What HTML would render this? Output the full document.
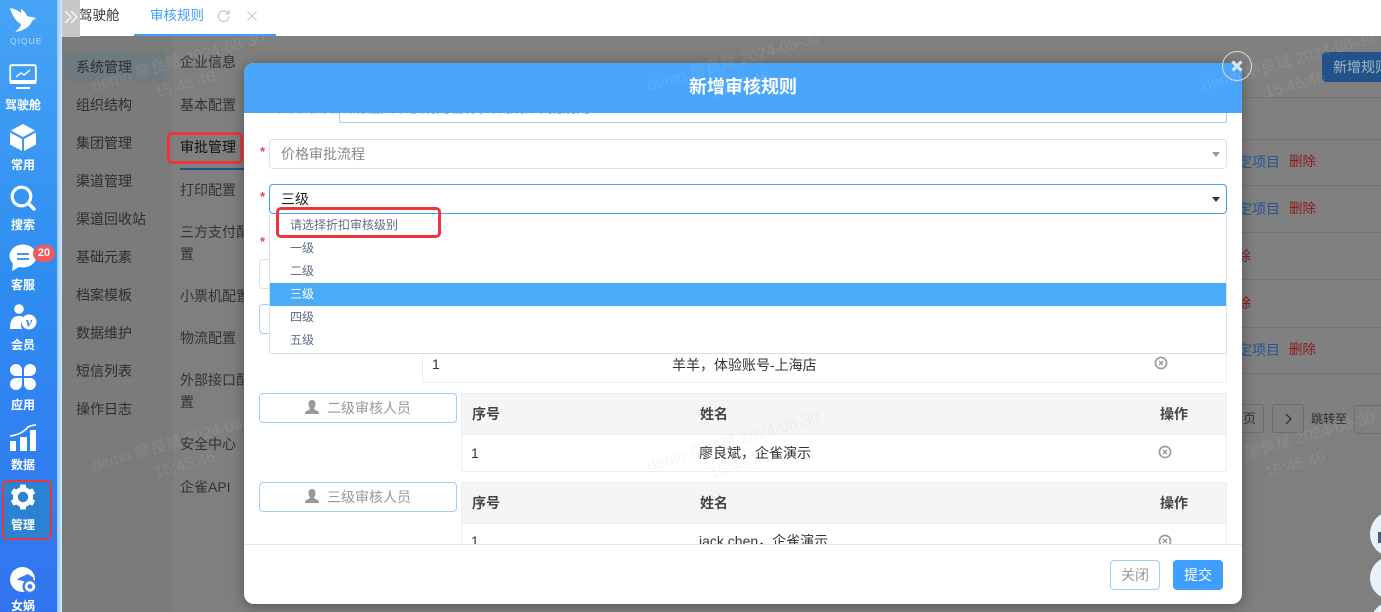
<!DOCTYPE html>
<html lang="zh"><head><meta charset="utf-8"><title>新增审核规则</title>
<style>
*{box-sizing:border-box}
html,body{margin:0;padding:0;width:1381px;height:612px;overflow:hidden;background:#7f7f7f}
body{position:relative;font-family:"Liberation Sans","Noto Sans CJK SC",sans-serif;font-size:14px;color:#333}
.a,.t{position:absolute}
.t{white-space:nowrap;line-height:20px;transform:translateY(-10px)}
.nav{position:absolute;left:0;width:46px;text-align:center;color:#fff;font-size:12px;font-weight:700;line-height:16px;white-space:nowrap}
.m1{left:76px;color:#2e2e2e}.m2{left:180px;color:#333;}
.ln{position:absolute;left:0;right:0;height:1px;background:#757575}
.sel{position:absolute;left:25px;width:958px;height:30px;border:1px solid #dcdfe6;border-radius:4px;background:#fff;line-height:28px;padding-left:11px}
.arr{position:absolute;right:6px;top:12px;width:0;height:0;border:4px solid transparent;border-top:5px solid #999;border-bottom:0}
.opt{position:absolute;left:0;right:0;height:23px;line-height:23px;padding-left:20px;font-size:12px;color:#5f6f8a}
.star{position:absolute;left:16px;color:#f04545;font-size:13px;line-height:12px;font-weight:700}
.btn{position:absolute;left:15px;width:198px;height:30px;border:1px solid #a0cfff;border-radius:4px;background:#fff;color:#999;font-size:14px;line-height:28px;text-align:center}
.btn svg{vertical-align:-1px;margin-right:8px}
.tb{position:absolute;left:217px;width:766px;border:1px solid #ebeef5;background:#fff}
.th{height:41px;background:#f5f5f7;border-bottom:1px solid #ebeef5;position:relative;font-weight:700;font-size:14px;color:#444}
.tb span{position:absolute;white-space:nowrap;line-height:20px}
.wm{position:absolute;width:240px;text-align:center;color:rgba(255,255,255,.09);font-size:16px;line-height:24px;transform:rotate(-16deg);white-space:nowrap}
</style></head><body>

<!-- background right table -->
<div class="a" style="left:1242px;top:36px;width:139px;height:400px;background:#808080"></div>
<div class="ln" style="top:97px;left:1242px"></div><div class="ln" style="top:139px;left:1242px"></div>
<div class="ln" style="top:185px;left:1242px"></div><div class="ln" style="top:232px;left:1242px"></div>
<div class="ln" style="top:279px;left:1242px"></div><div class="ln" style="top:327px;left:1242px"></div>
<div class="ln" style="top:373px;left:1242px"></div>
<div class="a" style="left:1322px;top:52px;width:70px;height:30px;background:#22528a;border-radius:4px;color:#a9b4c2;font-size:14px;line-height:30px;padding-left:11px;white-space:nowrap">新增规则</div>
<div class="t" style="left:1238px;top:162px;color:#24568f;font-size:14px">定项目</div><div class="t" style="left:1289px;top:162px;color:#8e1b1b;font-size:13.500px">删除</div>
<div class="t" style="left:1238px;top:209px;color:#24568f;font-size:14px">定项目</div><div class="t" style="left:1289px;top:209px;color:#8e1b1b;font-size:13.500px">删除</div>
<div class="t" style="left:1223px;top:256px;color:#8e1b1b;font-size:14px">删除</div>
<div class="t" style="left:1223px;top:303px;color:#8e1b1b;font-size:14px">删除</div>
<div class="t" style="left:1238px;top:350px;color:#24568f;font-size:14px">定项目</div><div class="t" style="left:1289px;top:350px;color:#8e1b1b;font-size:13.500px">删除</div>
<div class="a" style="left:1230px;top:404px;width:34px;height:29px;border:1px solid #6e6e6e;border-radius:3px;color:#333;font-size:13px;line-height:27px;padding-left:12px">页</div>
<div class="a" style="left:1272px;top:404px;width:32px;height:29px;border:1px solid #6e6e6e;border-radius:3px"><svg width="30" height="27"><path d="M13 9l5 5-5 5" fill="none" stroke="#333" stroke-width="1.300"/></svg></div>
<div class="t" style="left:1311px;top:419px;font-size:12px;color:#2e2e2e">跳转至</div>
<div class="a" style="left:1354px;top:405px;width:40px;height:29px;border:1px solid #6e6e6e;border-radius:3px"></div>
<div class="a" style="left:1370px;top:511px;width:46px;height:46px;border-radius:50%;background:#e9f1fb"></div>
<div class="a" style="left:1378px;top:532px;width:3px;height:11px;background:#4a5a78"></div>
<div class="a" style="left:1370px;top:556px;width:46px;height:44px;border-radius:50%;background:#e9f1fb"></div>
<div class="a" style="left:1371px;top:602px;width:40px;height:40px;border-radius:50%;background:#e9f1fb"></div>

<!-- left menus -->
<div class="a" style="left:62px;top:36px;width:111px;height:576px;background:#7b7b7b"></div>
<div class="a" style="left:65px;top:52px;width:100px;height:30px;background:#6f7a80;border-radius:4px"></div>
<div class="t m1" style="top:67px">系统管理</div><div class="t m1" style="top:105px">组织结构</div>
<div class="t m1" style="top:143px">集团管理</div><div class="t m1" style="top:181px">渠道管理</div>
<div class="t m1" style="top:219px">渠道回收站</div><div class="t m1" style="top:257px">基础元素</div>
<div class="t m1" style="top:295px">档案模板</div><div class="t m1" style="top:333px">数据维护</div>
<div class="t m1" style="top:371px">短信列表</div><div class="t m1" style="top:409px">操作日志</div>

<div class="t m2" style="top:62px">企业信息</div><div class="t m2" style="top:105px">基本配置</div>
<div class="t m2" style="top:147px;color:#111">审批管理</div><div class="t m2" style="top:190px">打印配置</div>
<div class="t m2" style="top:232px">三方支付配</div><div class="t m2" style="top:254px">置</div>
<div class="t m2" style="top:296px">小票机配置</div><div class="t m2" style="top:338px">物流配置</div>
<div class="t m2" style="top:380px">外部接口配</div><div class="t m2" style="top:402px">置</div>
<div class="t m2" style="top:444px">安全中心</div><div class="t m2" style="top:487px">企雀API</div>
<div class="a" style="left:180px;top:168px;width:64px;height:2px;background:#24508a"></div>
<div class="a" style="left:167px;top:132px;width:76px;height:32px;border:3px solid #e8383a;border-radius:5px"></div>

<!-- top bar -->
<div class="a" style="left:62px;top:0;width:1319px;height:36px;background:#fff"></div>
<div class="a" style="left:62px;top:0;width:18px;height:37px;background:#c8c8c8;color:#fff"><svg width="18" height="36"><path d="M3 11l6 6-6 6M9 11l6 6-6 6" fill="none" stroke="#fff" stroke-width="1.200"/></svg></div>
<div class="t" style="left:79px;top:16px;color:#333;font-size:13.500px">驾驶舱</div>
<div class="t" style="left:150px;top:16px;color:#409eff;font-size:13.500px">审核规则</div>
<div class="a" style="left:134px;top:34px;width:142px;height:2px;background:#409eff"></div>
<svg class="a" style="left:215px;top:7px" width="18" height="18" viewBox="0 0 18 18"><path d="M14 9.500A5.300 5.300 0 1 1 12.400 5.300L14 6.800M14 3v3.800h-3.600" fill="none" stroke="#c4c6cb" stroke-width="1.200"/></svg>
<svg class="a" style="left:246px;top:10px" width="12" height="12"><path d="M1.500 1.500l9 9M10.500 1.500l-9 9" stroke="#c8cacd" stroke-width="1.100"/></svg>

<!-- sidebar -->
<div class="a" style="left:0;top:0;width:57px;height:612px;background:linear-gradient(180deg,#47a4f6 0,#2f8df2 45%,#3274f0 100%)"></div>
<div class="a" style="left:57px;top:0;width:5px;height:612px;background:linear-gradient(90deg,#8cc8fb,#d3eafd)"></div>
<svg class="a" style="left:0;top:0" width="50" height="36" viewBox="0 0 50 36"><path d="M10 8C14 9 18 10 21 13L21 9C24 11 26 13 27 16C30 17 33 17 36 18L32 21C30 27 23 31 15 32C19 29 21 26 21 24C16 22 12 15 10 8Z" fill="#fff"/></svg>
<div class="a" style="left:10px;top:35px;width:30px;font-size:8.500px;line-height:12px;letter-spacing:1px;color:#b9dcfb;white-space:nowrap">QIQUE</div>
<svg class="a" style="left:9px;top:64px" width="28" height="26" viewBox="0 0 28 26"><rect x="1.200" y="1.200" width="25.600" height="17.600" rx="1.500" fill="none" stroke="#fff" stroke-width="1.800"/><path d="M1 16h26v4H1z" fill="#fff"/><path d="M7 13l5-4 3 2 6-5" fill="none" stroke="#fff" stroke-width="1.400"/><path d="M7 23h14v2H7z" fill="#fff"/></svg>
<div class="nav" style="top:97px">驾驶舱</div>
<svg class="a" style="left:10px;top:124px" width="26" height="27" viewBox="0 0 26 27"><path d="M13 0l12 6.500L13 13 1 6.500zM0 8.500l12 6.500v12L0 20.500zM26 8.500v12l-12 6.500V15z" fill="#fff"/></svg>
<div class="nav" style="top:157px">常用</div>
<svg class="a" style="left:10px;top:185px" width="26" height="26" viewBox="0 0 26 26"><circle cx="11.500" cy="11.500" r="9.300" fill="none" stroke="#fff" stroke-width="3.200"/><path d="M18.500 18.500l5.500 5.500" stroke="#fff" stroke-width="3.400" stroke-linecap="round"/></svg>
<div class="nav" style="top:217px">搜索</div>
<svg class="a" style="left:9px;top:244px" width="28" height="27" viewBox="0 0 28 27"><ellipse cx="14" cy="12" rx="13.500" ry="11.500" fill="#fff"/><path d="M4 19l-1 8 9-5z" fill="#fff"/><path d="M8 10h12M8 15h12" stroke="#3f97f3" stroke-width="2"/></svg>
<div class="a" style="left:33px;top:245px;width:22px;height:17px;border-radius:9px;background:#ed5a5f;color:#fff;font-size:11px;font-weight:700;line-height:17px;text-align:center">20</div>
<div class="nav" style="top:277px">客服</div>
<svg class="a" style="left:9px;top:304px" width="28" height="26" viewBox="0 0 28 26"><circle cx="10" cy="5" r="4.800" fill="#fff"/><path d="M1 25c0-9 3-13 9-13 2 0 4 .5 5.500 1.500C12 16 11 21 13 25z" fill="#fff"/><circle cx="20" cy="18" r="7.500" fill="#fff"/><text x="20" y="22.500" text-anchor="middle" font-size="14" font-weight="700" font-style="italic" fill="#3888ef" font-family="Liberation Serif">v</text></svg>
<div class="nav" style="top:337px">会员</div>
<svg class="a" style="left:10px;top:364px" width="26" height="26" viewBox="0 0 26 26"><path d="M6 0a6 6 0 0 1 6 6v6H6A6 6 0 0 1 6 0zM20 0a6 6 0 0 1 0 12h-6V6a6 6 0 0 1 6-6zM6 14h6v6a6 6 0 1 1-6-6zM14 14h6a6 6 0 1 1-6 6z" fill="#fff"/></svg>
<div class="nav" style="top:397px">应用</div>
<svg class="a" style="left:10px;top:424px" width="27" height="27" viewBox="0 0 27 27"><path d="M0 17h6v10H0zM10 13h7v14h-7zM20 6h6v21h-6z" fill="#fff"/><path d="M0 12C8 11 14 8 18 3c2-1 4-2 8-2" fill="none" stroke="#fff" stroke-width="1.600"/></svg>
<div class="nav" style="top:457px">数据</div>

<div class="a" style="left:2px;top:480px;width:50px;height:60px;background:#2b82d2;border:2px solid #e8383a;border-radius:6px"></div>
<svg class="a" style="left:10px;top:484px" width="26" height="26" viewBox="0 0 26 26"><circle cx="13" cy="13" r="7.600" fill="none" stroke="#fff" stroke-width="4.800"/><g fill="#fff"><rect x="10" y="0.500" width="6" height="5" rx="1"/><rect x="10" y="20.500" width="6" height="5" rx="1"/><rect x="10" y="0.500" width="6" height="5" rx="1" transform="rotate(60 13 13)"/><rect x="10" y="0.500" width="6" height="5" rx="1" transform="rotate(120 13 13)"/><rect x="10" y="0.500" width="6" height="5" rx="1" transform="rotate(240 13 13)"/><rect x="10" y="0.500" width="6" height="5" rx="1" transform="rotate(300 13 13)"/></g></svg>
<div class="nav" style="top:517px">管理</div>

<svg class="a" style="left:10px;top:567px" width="27" height="27" viewBox="0 0 27 27"><circle cx="12.500" cy="12.500" r="12.500" fill="#fff"/><path d="M7 13c3-4 7-3 10-6 3 1 6 3 7 5-3 1-5 1-8 3-3-1-6-2-9-2z" fill="#3a7df0"/><circle cx="20" cy="19.500" r="7.500" fill="#3a7df0"/><circle cx="20" cy="19.500" r="3.800" fill="none" stroke="#fff" stroke-width="2.800"/></svg>
<div class="nav" style="top:598px">女娲</div>

<!-- modal -->
<div class="a" style="left:244px;top:63px;width:998px;height:541px;background:#fff;border-radius:10px;overflow:hidden;box-shadow:0 2px 14px rgba(0,0,0,.35)">
  <div class="a" style="left:0;top:50px;width:998px;height:431px;overflow:hidden;background:#fff">
    <div class="a" style="left:28px;top:-15px;line-height:20px;color:#ccc;white-space:nowrap">审核规则名称</div>
    <div class="a" style="left:95px;top:-30px;width:888px;height:40px;border:1px solid #b7c8e6;border-radius:2px"></div>
    <div class="a" style="left:108px;top:-15px;line-height:20px;color:#aaa;white-space:nowrap">请输入审核规则名称，如折扣审批规则</div>
    <div class="star" style="top:33px">*</div>
    <div class="sel" style="top:26px;color:#888">价格审批流程<i class="arr"></i></div>
    <div class="star" style="top:78px">*</div>
    <div class="sel" style="top:71px;color:#222;border-color:#409eff">三级<i class="arr" style="border-top-color:#333"></i></div>
    <div class="star" style="top:123px">*</div>

    <div class="btn" style="top:146px;border-color:#dcdfe6"></div>
    <div class="btn" style="top:191px"></div>
    <div class="tb" style="left:178px;top:200px;width:805px;height:70px"><span style="left:9px;top:40px">1</span><span style="left:249px;top:41px">羊羊，体验账号-上海店</span>
      <svg style="position:absolute;left:731px;top:42px" width="14" height="14"><circle cx="7" cy="7" r="5.600" fill="none" stroke="#999" stroke-width="1.600"/><path d="M5 5l4 4M9 5l-4 4" stroke="#999" stroke-width="1.300"/></svg></div>

    <div class="a" style="left:25px;top:101px;width:958px;height:140px;background:#fff;border:1px solid #dcdfe6;border-top:0">
      <div class="opt" style="top:0">请选择折扣审核级别</div>
      <div class="opt" style="top:23px">一级</div>
      <div class="opt" style="top:46px">二级</div>
      <div class="opt" style="top:69px;background:#4aabf8;color:#fff">三级</div>
      <div class="opt" style="top:92px">四级</div>
      <div class="opt" style="top:115px">五级</div>
    </div>
    <div class="a" style="left:32px;top:94px;width:165px;height:31px;border:3px solid #e8383a;border-radius:5px"></div>

    <div class="btn" style="top:280px"><svg width="14" height="14" viewBox="0 0 14 14"><path d="M7 0c2.300 0 3.500 1.800 3.500 3.800S9.500 8 9 8.500c0 1 1 1.300 2.500 2 1.500.6 2.500 1.200 2.500 3.500H0c0-2.300 1-2.900 2.500-3.500C4 9.800 5 9.500 5 8.500 4.500 8 3.500 5.800 3.500 3.800S4.700 0 7 0z" fill="#999"/></svg>二级审核人员</div>
    <div class="tb" style="top:280px;height:79px">
      <div class="th"><span style="left:10px;top:10px">序号</span><span style="left:238px;top:10px">姓名</span><span style="left:698px;top:10px">操作</span></div>
      <span style="left:9px;top:49px">1</span><span style="left:237px;top:49px">廖良斌，企雀演示</span>
      <svg style="position:absolute;left:696px;top:51px" width="14" height="14"><circle cx="7" cy="7" r="5.600" fill="none" stroke="#999" stroke-width="1.600"/><path d="M5 5l4 4M9 5l-4 4" stroke="#999" stroke-width="1.300"/></svg>
    </div>
    <div class="btn" style="top:369px"><svg width="14" height="14" viewBox="0 0 14 14"><path d="M7 0c2.300 0 3.500 1.800 3.500 3.800S9.500 8 9 8.500c0 1 1 1.300 2.500 2 1.500.6 2.500 1.200 2.500 3.500H0c0-2.300 1-2.900 2.500-3.500C4 9.800 5 9.500 5 8.500 4.500 8 3.500 5.800 3.500 3.800S4.700 0 7 0z" fill="#999"/></svg>三级审核人员</div>
    <div class="tb" style="top:369px;height:79px">
      <div class="th"><span style="left:10px;top:10px">序号</span><span style="left:238px;top:10px">姓名</span><span style="left:698px;top:10px">操作</span></div>
      <span style="left:9px;top:48px">1</span><span style="left:237px;top:48px">jack.chen，企雀演示</span>
      <svg style="position:absolute;left:696px;top:51px" width="14" height="14"><circle cx="7" cy="7" r="5.600" fill="none" stroke="#999" stroke-width="1.600"/><path d="M5 5l4 4M9 5l-4 4" stroke="#999" stroke-width="1.300"/></svg>
    </div>
  </div>
  <div class="a" style="left:0;top:0;width:998px;height:50px;background:#4aa6fa;color:#fff;font-size:18px;font-weight:700;line-height:48px;text-align:center">新增审核规则</div>
  <div class="a" style="left:0;top:481px;width:998px;height:1px;background:#e4e7ed"></div>
  <div class="a" style="left:866px;top:497px;width:50px;height:30px;border:1px solid #a0cfff;border-radius:4px;color:#999;line-height:28px;text-align:center">关闭</div>
  <div class="a" style="left:929px;top:497px;width:50px;height:30px;background:#409eff;border-radius:4px;color:#fff;line-height:30px;text-align:center">提交</div>
</div>

<!-- close -->
<svg class="a" style="left:1222px;top:51px" width="30" height="30" viewBox="0 0 30 30"><circle cx="15" cy="15" r="14.500" fill="none" stroke="#d9d9d9" stroke-width="1"/><path d="M10.500 10.500l9 9M19.500 10.500l-9 9" stroke="#d5e6f7" stroke-width="3.200"/></svg>

<!-- watermarks -->
<div class="wm" style="left:62px;top:50px">demo 廖良斌 2024-08-30<br>15:45:46</div>
<div class="wm" style="left:617px;top:50px">demo 廖良斌 2024-08-30<br>15:45:46</div>
<div class="wm" style="left:1172px;top:50px">demo 廖良斌 2024-08-30<br>15:45:46</div>
<div class="wm" style="left:62px;top:430px">demo 廖良斌 2024-08-30<br>15:45:46</div>
<div class="wm" style="left:617px;top:430px;color:rgba(150,150,150,.09)">demo 廖良斌 2024-08-30<br>15:45:46</div>
<div class="wm" style="left:1172px;top:430px">demo 廖良斌 2024-08-30<br>15:45:46</div>
</body></html>
